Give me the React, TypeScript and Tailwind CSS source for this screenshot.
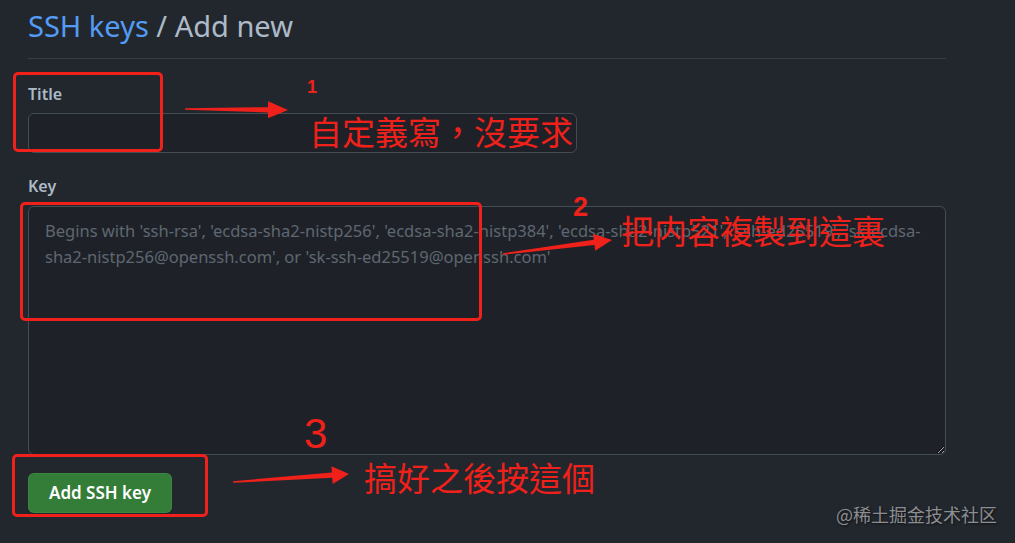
import React from 'react';

const RED = '#f0201a';

type Pt = [number, number];

// tapered annotation arrow: thin tail, wide shaft near head, triangular head
function arrowPoints(tail: Pt, tip: Pt, headLen: number, headHalf: number, shaftHalf: number) {
  const dx = tip[0] - tail[0];
  const dy = tip[1] - tail[1];
  const len = Math.hypot(dx, dy);
  const ux = dx / len;
  const uy = dy / len;
  const nx = -uy;
  const ny = ux;
  const bx = tip[0] - ux * headLen;
  const by = tip[1] - uy * headLen;
  const pts: Pt[] = [
    [tail[0] + nx * 0.8, tail[1] + ny * 0.8],
    [bx + nx * shaftHalf, by + ny * shaftHalf],
    [bx + nx * headHalf, by + ny * headHalf],
    tip,
    [bx - nx * headHalf, by - ny * headHalf],
    [bx - nx * shaftHalf, by - ny * shaftHalf],
    [tail[0] - nx * 0.8, tail[1] - ny * 0.8],
  ];
  return pts.map((p) => `${p[0].toFixed(1)},${p[1].toFixed(1)}`).join(' ');
}

const placeholder =
  "Begins with 'ssh-rsa', 'ecdsa-sha2-nistp256', 'ecdsa-sha2-nistp384', 'ecdsa-sha2-nistp521', 'ssh-ed25519', 'sk-ecdsa-\nsha2-nistp256@openssh.com', or 'sk-ssh-ed25519@openssh.com'";

export default function App() {
  return (
    <div className="relative w-[1015px] h-[543px] overflow-hidden bg-[#22272e] font-['Noto_Sans',sans-serif] [color-scheme:dark]">
      {/* Form */}
      <div className="ml-[28px] w-[918px] pt-[8px] flex flex-col items-start">
        <div className="self-stretch border-b border-[#373e47] pb-[14px]">
          <h1 className="text-[29px] leading-[36px] font-normal text-[#adbac7]">
            <span className="text-[#539bf5]">SSH keys</span> / Add new
          </h1>
        </div>

        <div className="mt-[23px] flex flex-col gap-[7px]">
          <label className="text-[16px] leading-[24px] font-semibold text-[#adbac7]">Title</label>
          <input
            type="text"
            className="w-[549px] h-[40px] rounded-[6px] border border-[#444c56] bg-[#1e2228] px-3 outline-none"
          />
        </div>

        <div className="mt-[21px] flex flex-col gap-[8px]">
          <label className="text-[16px] leading-[24px] font-semibold text-[#adbac7]">Key</label>
          <textarea
            placeholder={placeholder}
            className="w-[918px] h-[249px] resize-y rounded-[6px] border border-[#444c56] bg-[#1e2228] pl-[16px] pr-[12px] pt-[11px] text-[16.5px] leading-[26px] whitespace-pre overflow-hidden placeholder:text-[#5f6771] outline-none"
          />
        </div>

        <button className="mt-[18px] h-[40px] w-[144px] rounded-[6px] border border-[#46954a]/40 bg-[#347d39] text-[17px] font-semibold text-white">
          Add SSH key
        </button>
      </div>

      {/* Annotations */}
      <svg className="pointer-events-none absolute inset-0" width="1015" height="543" viewBox="0 0 1015 543">
        <polygon points={arrowPoints([185, 109], [288, 110], 20, 8.5, 2.6)} fill={RED} />
        <polygon points={arrowPoints([503, 254], [612, 240], 18, 8.5, 2.6)} fill={RED} />
        <polygon points={arrowPoints([233, 482], [349, 474], 17, 9, 2.6)} fill={RED} />
      </svg>

      <div className="pointer-events-none absolute left-[13px] top-[72px] h-[80px] w-[150px] rounded-[5px] border-[3px] border-[#f0201a]" />
      <div className="pointer-events-none absolute left-[20px] top-[202px] h-[119px] w-[462px] rounded-[5px] border-[3px] border-[#f0201a]" />
      <div className="pointer-events-none absolute left-[12px] top-[454px] h-[63px] w-[196px] rounded-[5px] border-[3px] border-[#f0201a]" />

      <span className="absolute left-[307px] top-[78px] text-[18px] leading-[18px] font-bold text-[#f0201a] font-['Liberation_Sans',sans-serif]">1</span>
      <span className="absolute left-[573px] top-[194px] text-[27px] leading-[27px] font-bold text-[#f0201a] font-['Liberation_Sans',sans-serif]">2</span>
      <span className="absolute left-[304px] top-[413px] text-[42px] leading-[42px] text-[#f0201a] font-['Liberation_Sans',sans-serif]">3</span>

      <span className="absolute left-[309px] top-[115px] whitespace-nowrap text-[33px] leading-[33px] text-[#f0201a] font-['Noto_Sans_CJK_TC',sans-serif]">自定義寫，沒要求</span>
      <span className="absolute left-[621px] top-[214px] whitespace-nowrap text-[33px] leading-[33px] text-[#f0201a] font-['Noto_Sans_CJK_TC',sans-serif]">把内容複製到這裏</span>
      <span className="absolute left-[364px] top-[461px] whitespace-nowrap text-[33px] leading-[33px] text-[#f0201a] font-['Noto_Sans_CJK_TC',sans-serif]">搞好之後按這個</span>

      {/* Watermark */}
      <span className="absolute left-[836px] top-[505px] whitespace-nowrap text-[18px] leading-[18px] text-[#8b8e93] [text-shadow:1px_1px_2px_#111] font-['Noto_Sans_CJK_SC',sans-serif]">@稀土掘金技术社区</span>
    </div>
  );
}
